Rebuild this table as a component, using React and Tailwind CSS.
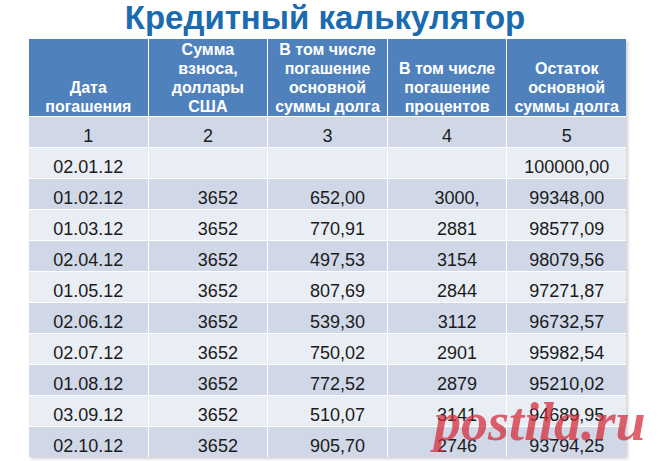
const header = [
  ['Дата', 'погашения'],
  ['Сумма', 'взноса,', 'доллары', 'США'],
  ['В том числе', 'погашение', 'основной', 'суммы долга'],
  ['В том числе', 'погашение', 'процентов'],
  ['Остаток', 'основной', 'суммы долга'],
];

const rows = [
  ['1', '2', '3', '4', '5'],
  ['02.01.12', '', '', '', '100000,00'],
  ['01.02.12', '3652', '652,00', '3000,', '99348,00'],
  ['01.03.12', '3652', '770,91', '2881', '98577,09'],
  ['02.04.12', '3652', '497,53', '3154', '98079,56'],
  ['01.05.12', '3652', '807,69', '2844', '97271,87'],
  ['02.06.12', '3652', '539,30', '3112', '96732,57'],
  ['02.07.12', '3652', '750,02', '2901', '95982,54'],
  ['01.08.12', '3652', '772,52', '2879', '95210,02'],
  ['03.09.12', '3652', '510,07', '3141', '94689,95'],
  ['02.10.12', '3652', '905,70', '2746', '93794,25'],
];

export default function App() {
  return (
    <div className="relative w-[660px] h-[461px] overflow-hidden bg-white font-['Liberation_Sans',Arial,sans-serif]">
      <h1 className="h-[39px] pt-[2px] pr-[10px] text-center text-[33px] leading-[32px] font-bold text-[#1b6bb0]">
        Кредитный калькулятор
      </h1>

      <div className="ml-[29px] w-[597px] grid grid-cols-5 gap-[1px] bg-white shadow-[2px_2px_3px_rgba(0,0,0,0.18)]">
        {header.map((lines, i) => (
          <div
            key={i}
            className="h-[77px] bg-[#4f81bd] flex flex-col justify-end items-center text-white font-bold text-[16px] leading-[19px]"
          >
            {lines.map((l) => (
              <span key={l}>{l}</span>
            ))}
          </div>
        ))}

        {rows.map((row, r) =>
          row.map((cell, c) => (
            <div
              key={r + '-' + c}
              className={
                'h-[30px] pt-[9px] flex items-center justify-center text-[18px] text-[#1b1b1b] ' +
                (r % 2 === 0 ? 'bg-[#d0d8e8] ' : 'bg-[#e9edf4] ') +
                (r > 0 && c > 0 && c < 4 ? 'pl-5' : '')
              }
            >
              {cell}
            </div>
          ))
        )}
      </div>

      {/* watermark */}
      <div className="absolute left-[434px] top-[395px] text-[54px] leading-none font-bold italic text-[#d42f3c]/75 font-['Liberation_Serif',serif]">
        postila.ru
      </div>
    </div>
  );
}
